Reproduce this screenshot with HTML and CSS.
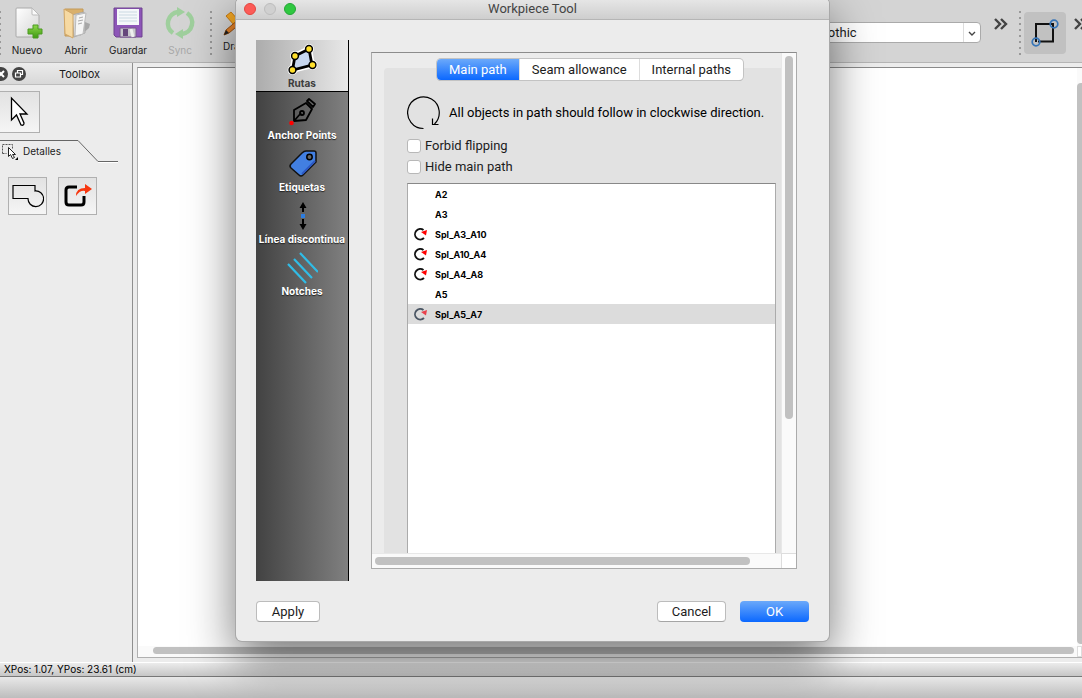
FILE: index.html
```html
<!DOCTYPE html>
<html lang="es">
<head>
<meta charset="utf-8">
<title>Workpiece Tool</title>
<link rel="stylesheet" href="styles.css">
</head>
<body>
<header class="toolbar">
  <span class="grip grip-edge"></span>
  <div class="tool-group">
    <button class="tool" type="button">
      <svg width="32" height="32" viewBox="0 0 32 32"><defs><linearGradient id="paper" x2="1" y2="1"><stop stop-color="#fff"/><stop offset="1" stop-color="#d5d5d5"/></linearGradient><linearGradient id="green" x2="0" y2="1"><stop stop-color="#8ed84a"/><stop offset="1" stop-color="#3f9a12"/></linearGradient></defs><path d="M6 1h15l7 7v21q0 1-1 1H6q-1 0-1-1V2q0-1 1-1z" fill="url(#paper)" stroke="#aaa"/><path d="M21 1v6q0 1 1 1h6z" fill="#fafafa" stroke="#bbb"/><path d="M22 18h5v4h4v5h-4v4h-5v-4h-5v-5h5z" fill="url(#green)" stroke="#4b9a20"/></svg>
      <span>Nuevo</span>
    </button>
    <button class="tool" type="button">
      <svg width="32" height="32" viewBox="0 0 32 32"><path d="M20 29l9-8 1-4-5-2z" fill="#888" opacity=".6"/><path d="M5 2h18v21l-9 6H5z" fill="#d9b06c" stroke="#c49a58"/><path d="M12 8l12-3 1 21-11 4z" fill="#d8d8d8" stroke="#aaa"/><path d="M16 8l10-2-3 21-8 2z" fill="#f5f5f5" stroke="#bbb"/><path d="M19 11l4-1M18 14l5-1M18 17l4-1" stroke="#aaa"/><path d="M4 2l9 5v24l-8-4z" fill="#f6d9a2" stroke="#d0a667"/></svg>
      <span>Abrir</span>
    </button>
    <button class="tool" type="button">
      <svg width="32" height="32" viewBox="0 0 32 32"><path d="M2 1h28v29H4l-2-2z" fill="#8d55b8" stroke="#6e4390"/><path d="M5 2h22v16H5z" fill="#f5f8fa"/><path d="M7 5h18M7 8h18M7 11h18M7 14h18" stroke="#cad9e2"/><path d="M8 21h16v9H8z" fill="#c7c7cc" stroke="#77578c"/><path d="M11 22h5v7h-5z" fill="#65477b"/><path d="M19 22l2 8" stroke="#eee" stroke-width="3"/></svg>
      <span>Guardar</span>
    </button>
    <button class="tool" type="button" disabled>
      <svg width="32" height="32" viewBox="0 0 32 32"><g fill="none" stroke="#9fcf9d" stroke-width="4.500"><path d="M9 26A11.500 11.500 0 0 1 14 5"/><path d="M23 6A11.500 11.500 0 0 1 18 27"/></g><path d="M13 0l8 5-8 5z" fill="#9fcf9d"/><path d="M19 22v10l-8-5z" fill="#9fcf9d"/></svg>
      <span>Sync</span>
    </button>
  </div>
  <span class="grip"></span>
  <button class="tool tool-draw" type="button">
    <svg width="26" height="26" viewBox="0 0 26 26"><path d="M3 5l5-4 17 19-5 4z" fill="#f5a823" stroke="#c97c12"/><path d="M22 3l3 3L6 22l-5 2 2-5z" fill="#e6832a" stroke="#9c5212"/><path d="M3 19l3 3-5 2z" fill="#222"/></svg>
    <span>Draw</span>
  </button>
  <div class="toolbar-end">
    <select class="font-select" aria-label="Font"><option>Gothic</option></select>
    <button class="more" type="button" aria-label="More"><svg width="14" height="12" viewBox="0 0 14 12"><path d="M1 1l5 5-5 5M7 1l5 5-5 5" fill="none" stroke="#444" stroke-width="2.400"/></svg></button>
    <span class="grip"></span>
    <button class="mode" type="button" aria-label="Rectangle"><svg width="28" height="28" viewBox="0 0 28 28"><path d="M5 23V5h17v17.500H7" fill="none" stroke="#111" stroke-width="2"/><g fill="none" stroke="#3675b8" stroke-width="1.700"><circle cx="23" cy="5" r="3.800"/><circle cx="5" cy="23" r="3.800"/></g></svg></button>
    <button class="more" type="button" aria-label="More"><svg width="14" height="12" viewBox="0 0 14 12"><path d="M1 1l5 5-5 5M7 1l5 5-5 5" fill="none" stroke="#444" stroke-width="2.400"/></svg></button>
  </div>
</header>

<main class="workspace">
  <aside class="dock">
    <div class="dock-title">
      <button class="dock-button" type="button" aria-label="Close"><svg width="14" height="14" viewBox="0 0 14 14"><circle cx="7" cy="7" r="7" fill="#444"/><path d="M4 4l6 6M10 4l-6 6" stroke="#fff" stroke-width="2"/></svg></button>
      <button class="dock-button" type="button" aria-label="Float"><svg width="14" height="14" viewBox="0 0 14 14"><circle cx="7" cy="7" r="7" fill="#444"/><path d="M5.500 5.500v-2h5v4H9M3.500 6h5v4h-5z" fill="none" stroke="#fff" stroke-width="1.200"/></svg></button>
      <h2>Toolbox</h2>
    </div>
    <button class="tile tile-arrow" type="button" aria-label="Pointer"><svg width="20" height="32" viewBox="0 0 20 32"><path d="M1.500 2v22l5-5 4.500 10q3 1 3-2l-4-9h7z" fill="#fff" stroke="#000" stroke-width="1.300"/></svg></button>
    <div class="section">
      <svg class="section-line" width="119" height="24" viewBox="0 0 119 24"><path d="M0 .5h78l20 21h20" fill="none" stroke="#666"/><path d="M98 22.500h20" stroke="#fff"/></svg>
      <div class="section-label">
        <svg width="17" height="17" viewBox="0 0 17 17"><path d="M1.500 10.500v-9h10v4M1.500 10.500h4" fill="none" stroke="#555" stroke-dasharray="2 1"/><path d="M7.500 4.500v9l2-2 2 4 2-1-2-3h3z" fill="#fff" stroke="#222"/><path d="M17 14v3h-3z"/></svg>
        <span>Detalles</span>
      </div>
    </div>
    <div class="tiles">
      <button class="tile" type="button" aria-label="Union"><svg width="32" height="24" viewBox="0 0 32 24"><path d="M1 1.500h22v5.500A7.800 7.800 0 1 1 16 14.500H1z" fill="none" stroke="#000" stroke-width="1.200"/></svg></button>
      <button class="tile" type="button" aria-label="Export"><svg width="30" height="26" viewBox="0 0 30 26"><path d="M14 4H6q-3 0-3 3v12q0 3 3 3h12q3 0 3-3v-6" fill="none" stroke="#000" stroke-width="3"/><path d="M13 13q0-8 9-8V1l7 5-7 5V8q-5-1-9 5z" fill="#f7370f"/></svg></button>
    </div>
  </aside>

  <section class="canvas">
    <div class="sheet"></div>
    <div class="canvas-v"><span></span></div>
    <div class="canvas-h"><span></span></div>
    <div class="canvas-corner"></div>
  </section>
</main>

<footer class="status">XPos: 1.07, YPos: 23.61 (cm)</footer>
<div class="bottom-strip"></div>

<div class="dialog" role="dialog" aria-labelledby="dialog-title">
  <div class="titlebar">
    <div class="lights"><span class="light red"></span><span class="light grey"></span><span class="light green"></span></div>
    <h1 id="dialog-title">Workpiece Tool</h1>
  </div>
  <div class="dialog-body">
    <div class="dialog-main">
      <nav class="pages">
        <button class="page selected" type="button">
          <svg width="32" height="32" viewBox="0 0 32 32"><g fill="#fff" stroke="#fff" stroke-width="6"><path d="M9 12L23 5l3 16L6.500 26z"/><g stroke-width="3"><circle cx="9" cy="12" r="3.400"/><circle cx="23" cy="5" r="3.400"/><circle cx="26.500" cy="21" r="3.400"/><circle cx="6.500" cy="26" r="3.400"/></g></g><path d="M9 12L23 5l3 16L6.500 26z" fill="#c7d7ef" stroke="#000" stroke-width="2.800"/><g fill="#ffdf2c" stroke="#000" stroke-width="1.500"><circle cx="9" cy="12" r="3.400"/><circle cx="23" cy="5" r="3.400"/><circle cx="26.500" cy="21" r="3.400"/><circle cx="6.500" cy="26" r="3.400"/></g></svg>
          <span>Rutas</span>
        </button>
        <button class="page" type="button">
          <svg width="32" height="32" viewBox="0 0 32 32"><g fill="none" stroke="#000" stroke-width="1.800" stroke-linejoin="round"><path d="M8 25V14l12-7 6 6-6 11-12 1 7-8"/><path d="M21 5l2-2 6 5-2 3z"/><circle cx="16" cy="17" r="2"/></g><circle cx="5.500" cy="27" r="2.300" fill="#f00"/></svg>
          <span>Anchor Points</span>
        </button>
        <button class="page" type="button">
          <svg width="32" height="32" viewBox="0 0 32 32"><path d="M28 3q2 0 2 2v9L17 27q-2 2-4 0l-8-7q-2-2 0-4L16 5q2-2 4-2z" fill="#427fe1" stroke="#111" stroke-width="1.500" stroke-linejoin="round"/><path d="M29 13L16 26" stroke="#2c59c4" stroke-width="2"/><circle cx="23.500" cy="9" r="2.700" fill="#666" stroke="#000" stroke-width="1.500"/></svg>
          <span>Etiquetas</span>
        </button>
        <button class="page" type="button">
          <svg width="32" height="32" viewBox="0 0 32 32"><path d="M17 5v7M17 19v8" stroke="#000" stroke-width="2"/><path d="M13.500 8L17 2l3.500 6zM13.500 24l3.500 6 3.500-6z"/><path d="M15 14h4v4h-4z" fill="#2d7de0"/></svg>
          <span>Línea discontinua</span>
        </button>
        <button class="page" type="button">
          <svg width="32" height="32" viewBox="0 0 32 32"><path d="M2 12l18 19M8 7l18 19M14 1l18 19" fill="none" stroke="#30bce6" stroke-width="2.200"/></svg>
          <span>Notches</span>
        </button>
      </nav>

      <div class="scroller">
        <div class="viewport">
          <div class="tabs" role="tablist">
            <button class="tab active" type="button" role="tab" aria-selected="true">Main path</button>
            <button class="tab" type="button" role="tab">Seam allowance</button>
            <button class="tab" type="button" role="tab">Internal paths</button>
          </div>
          <div class="pane">
            <p class="hint"><svg width="34" height="34" viewBox="0 0 34 34"><path d="M16.500 32.500A15.800 15.800 0 1 1 27.500 28M25.500 22.500v6h6" fill="none" stroke="#000" stroke-width="1.200"/></svg><span>All objects in path should follow in clockwise direction.</span></p>
            <label class="check"><input type="checkbox"><span>Forbid flipping</span></label>
            <label class="check"><input type="checkbox"><span>Hide main path</span></label>
            <ul class="list">
              <li>A2</li>
              <li>A3</li>
              <li class="curve"><svg width="15" height="14" viewBox="0 0 15 14"><path d="M11 11A5.300 5.300 0 1 1 10.500 3" fill="none" stroke="#111" stroke-width="1.900"/><path d="M8 5l6-2-1 5.500z" fill="#f00"/></svg>Spl_A3_A10</li>
              <li class="curve"><svg width="15" height="14" viewBox="0 0 15 14"><path d="M11 11A5.300 5.300 0 1 1 10.500 3" fill="none" stroke="#111" stroke-width="1.900"/><path d="M8 5l6-2-1 5.500z" fill="#f00"/></svg>Spl_A10_A4</li>
              <li class="curve"><svg width="15" height="14" viewBox="0 0 15 14"><path d="M11 11A5.300 5.300 0 1 1 10.500 3" fill="none" stroke="#111" stroke-width="1.900"/><path d="M8 5l6-2-1 5.500z" fill="#f00"/></svg>Spl_A4_A8</li>
              <li>A5</li>
              <li class="curve current"><svg width="15" height="14" viewBox="0 0 15 14"><path d="M11 11A5.300 5.300 0 1 1 10.500 3" fill="none" stroke="#4a5563" stroke-width="1.900"/><path d="M8 5l6-2-1 5.500z" fill="#e8404c"/></svg>Spl_A5_A7</li>
            </ul>
          </div>
        </div>
        <div class="bar-v"><span></span></div>
        <div class="bar-h"><span></span></div>
        <div class="bar-corner"></div>
      </div>
    </div>
    <div class="actions">
      <button class="button" type="button">Apply</button>
      <button class="button cancel" type="button">Cancel</button>
      <button class="button primary" type="button">OK</button>
    </div>
  </div>
</div>
</body>
</html>
```
FILE: styles.css
```css
* { box-sizing: border-box; }

html, body { height: 100%; }

body {
  margin: 0;
  display: flex;
  flex-direction: column;
  overflow: hidden;
  background: #ececec;
  color: #1c1c1c;
  font: 13px/16px Roboto, "Liberation Sans", sans-serif;
}

button, input, select { font: inherit; color: inherit; }

button {
  margin: 0;
  padding: 0;
  border: 0;
  background: none;
}

svg { display: block; flex: none; }

h1, h2, p, ul { margin: 0; padding: 0; font: inherit; }

.tool, .dock, .status, .page, .list { font-family: Inter, "Liberation Sans", sans-serif; }

/* Toolbar */
.toolbar {
  display: flex;
  flex: none;
  height: 63px;
  border-bottom: 1px solid #b5b5b5;
  background: #d4d4d4;
  overflow: hidden;
}

.grip {
  flex: none;
  width: 2px;
  height: 46px;
  margin-top: 11px;
  background: repeating-linear-gradient(#999 0 2px, transparent 2px 6px);
}

.grip-edge { width: 1px; }

.tool-group {
  display: flex;
  gap: 17px;
  padding: 7px 14px 0 10px;
}

.tool {
  display: flex;
  flex-direction: column;
  align-items: center;
  gap: 4px;
  height: 52px;
  font-size: 10px;
  line-height: 14px;
}

.tool:disabled { color: #a8a8a8; }

.tool-draw {
  align-items: flex-start;
  gap: 1px;
  margin: 11px 0 0 11px;
  line-height: 16px;
}

.toolbar-end {
  display: flex;
  flex: none;
  margin-left: auto;
}

.font-select {
  appearance: none;
  width: 169px;
  height: 21px;
  margin-top: 22px;
  padding: 0 6px;
  border: 1px solid #aaa;
  border-radius: 4px;
  background:
    url("data:image/svg+xml,%3Csvg xmlns='http://www.w3.org/2000/svg' width='8' height='5'%3E%3Cpath d='M1 1l3 3 3-3' fill='none' stroke='%23444' stroke-width='1.400'/%3E%3C/svg%3E") right 4px top 8px no-repeat,
    linear-gradient(#ddd, #ddd) right 16px top / 1px 100% no-repeat,
    #fff;
}

.more {
  flex: none;
  align-self: flex-start;
  margin: 18px 11px 0 13px;
}

.more:last-child { margin: 18px 0 0 8px; width: 8px; overflow: hidden; }

.mode {
  display: grid;
  place-items: center;
  width: 42px;
  height: 42px;
  margin: 12px 0 0 3px;
  border-radius: 4px;
  background: #c1c1c1;
}

/* Workspace */
.workspace {
  display: flex;
  flex: 1;
  min-height: 0;
}

.dock {
  flex: none;
  width: 133px;
  border-right: 1px solid #8f8f8f;
}

.dock-title {
  display: flex;
  align-items: center;
  height: 22px;
  padding-right: 3px;
  border-bottom: 1px solid #bdbdbd;
  background: linear-gradient(#ececec, #d8d8d8);
  font-size: 11px;
}

.dock-title h2 { flex: 1; text-align: center; }

.dock-button { flex: none; width: 14px; margin-right: 4px; }
.dock-button:first-child { width: 8px; overflow: hidden; }
.dock-button:first-child svg { margin-left: -6px; }

.tile {
  display: grid;
  place-items: center;
  width: 39px;
  height: 38px;
  border: 1px solid #b0b0b0;
  background: linear-gradient(#e2e2e2, #f5f5f5);
}

.tile-arrow {
  width: 40px;
  height: 42px;
  margin-top: 6px;
  border-left: 0;
}

.section {
  display: grid;
  height: 30px;
  margin-top: 7px;
}

.section-line, .section-label { grid-area: 1 / 1; }

.section-label {
  display: flex;
  align-items: flex-start;
  gap: 5px;
  padding: 3px 0 0 1px;
  font-size: 10px;
}

.tiles {
  display: flex;
  gap: 11px;
  margin-top: 7px;
  padding-left: 8px;
}

.canvas {
  display: grid;
  grid-template: 1fr 11px / 1fr 5px;
  flex: 1;
  margin: 4px 0 4px 4px;
  border: 1px solid #b0b0b0;
  border-top-color: #8a8a8a;
  border-right: 0;
  background: #fff;
}

.canvas-v { padding: 15px 0 2px; background: #fafafa; }
.canvas-v span { display: block; height: 100%; border-radius: 4px 0 0 4px; background: #c1c1c1; }
.canvas-h { padding: 1px 3px 3px 15px; background: #fafafa; }
.canvas-h span { display: block; height: 7px; border-radius: 4px; background: #c1c1c1; }
.canvas-corner { border: 1px solid #ddd; }

.status {
  flex: none;
  height: 15px;
  padding-left: 4px;
  border-top: 1px solid #fff;
  border-bottom: 1px solid #777;
  background: linear-gradient(#ececec, #c6c6c6);
  color: #000;
  font-size: 10px;
  line-height: 13px;
}

.bottom-strip {
  flex: none;
  height: 21px;
  background: linear-gradient(#e8e8e8, #bdbdbd);
}

/* Dialog window */
.dialog {
  position: absolute;
  left: 236px;
  top: -2px;
  width: 593px;
  display: flex;
  flex-direction: column;
  border-radius: 6px;
  background: #ececec;
  box-shadow: 0 0 0 1px #a8a8a8, 0 18px 48px rgba(0, 0, 0, .55);
}

.titlebar {
  display: flex;
  align-items: center;
  height: 22px;
  padding: 0 8px;
  border-bottom: 1px solid #b5b5b5;
  border-radius: 6px 6px 0 0;
  background: linear-gradient(#e8e8e8, #cecece);
  color: #444;
}

.titlebar h1 { flex: 1; margin-right: 52px; text-align: center; }

.lights { display: flex; gap: 8px; }
.light { width: 12px; height: 12px; border: 1px solid #bdbdbd; border-radius: 50%; background: #d0d0d0; }
.red { border-color: #e2463f; background: #fc5b57; }
.green { border-color: #24a536; background: #2fc840; }

.dialog-body { padding: 20px 20px 19px; }

.dialog-main {
  display: flex;
  gap: 22px;
}

.pages {
  flex: none;
  width: 93px;
  height: 541px;
  border-right: 1px solid #000;
  background: linear-gradient(90deg, #424242, #808080);
}

.page {
  display: flex;
  flex-direction: column;
  align-items: center;
  width: 92px;
  height: 52px;
  padding-top: 4px;
  color: #fff;
  font-size: 10px;
  font-weight: 700;
  line-height: 14px;
  white-space: nowrap;
  text-shadow: 0 1px 1px #222;
}

.selected {
  border-bottom: 1px solid #000;
  background: linear-gradient(90deg, #acacac, #e8e8e8);
  color: #3c3c3c;
  text-shadow: none;
}

.scroller {
  display: grid;
  grid-template: 1fr 15px / 1fr 15px;
  flex: 1;
  height: 517px;
  min-width: 0;
  margin: 12px 12px 0 0;
  border: 1px solid #ababab;
  border-top-color: #8c8c8c;
}

.viewport {
  display: flex;
  flex-direction: column;
  padding: 6px 0 0 12px;
  min-width: 0;
}

.tabs {
  z-index: 1;
  display: flex;
  align-self: center;
  margin: 0 0 -12px 15px;
  border-radius: 4px;
  background: #fff;
  box-shadow: 0 0 0 1px #c3c3c3, 0 1px 0 #aaa;
}

.tab {
  height: 21px;
  padding: 0 12px;
  border-left: 1px solid #ddd;
  white-space: nowrap;
}

.tab.active {
  border: 0;
  border-radius: 4px 0 0 4px;
  background: linear-gradient(#6ba9fa, #0b68ff);
  color: #fff;
}

.pane {
  display: flex;
  flex: 1;
  flex-direction: column;
  padding: 28px 5px 0 23px;
  border-radius: 4px 0 0 0;
  background: #e2e2e2;
}

.hint {
  display: flex;
  align-items: center;
  gap: 8px;
  margin-bottom: 5px;
  color: #000;
  white-space: nowrap;
}

.check {
  display: flex;
  align-items: center;
  gap: 4px;
  height: 21px;
}

.check input {
  appearance: none;
  width: 14px;
  height: 14px;
  margin: 0;
  border: 1px solid #b8b8b8;
  border-radius: 3px;
  background: #fff;
}

.list {
  flex: 1;
  margin-top: 6px;
  border: 1px solid #ababab;
  border-top-color: #888;
  border-bottom: 0;
  background: #fff;
  color: #000;
  font-size: 9px;
  font-weight: 700;
  list-style: none;
}

.list li {
  display: flex;
  align-items: center;
  gap: 7px;
  height: 20px;
  padding: 1px 0 0 27px;
}

.list .curve { padding-left: 5px; }
.list .curve svg { margin-bottom: 2px; }
.list .current { background: #dcdcdc; }

.bar-v { padding: 3px 3px 0; border-left: 1px solid #e8e8e8; background: #fafafa; }
.bar-v span { display: block; width: 8px; height: 73%; border-radius: 4px; background: #c1c1c1; }
.bar-h { padding: 3px; border-top: 1px solid #e8e8e8; background: #fafafa; }
.bar-h span { display: block; width: 93%; height: 8px; border-radius: 4px; background: #c1c1c1; }
.bar-corner { border: solid #ddd; border-width: 1px 0 0 1px; background: #fff; }

.actions {
  display: flex;
  gap: 14px;
  padding-top: 20px;
}

.button {
  min-width: 64px;
  height: 21px;
  border: 1px solid #bcbcbc;
  border-bottom-color: #a5a5a5;
  border-radius: 4px;
  background: #fff;
}

.cancel { width: 69px; margin-left: auto; }

.primary {
  width: 69px;
  border: 0;
  background: linear-gradient(#6ba9fa, #0b68ff);
  color: #fff;
}
```
